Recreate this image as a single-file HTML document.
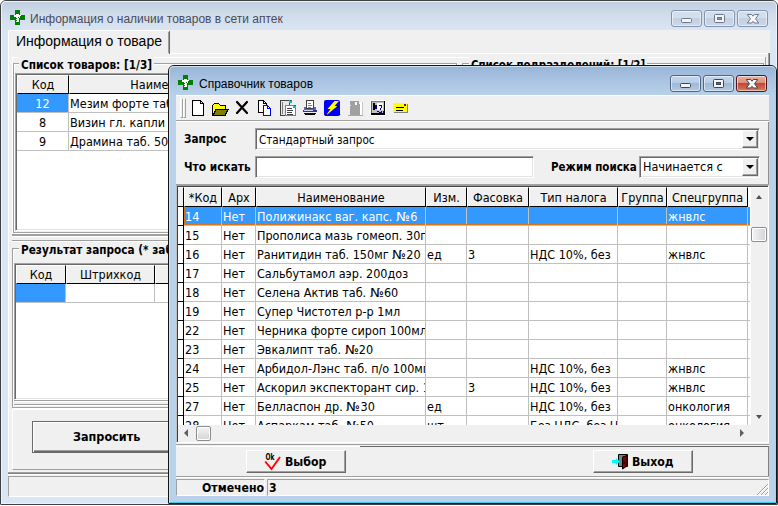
<!DOCTYPE html>
<html lang="ru">
<head>
<meta charset="utf-8">
<title>Информация о наличии товаров в сети аптек</title>
<style>
html,body{margin:0;padding:0;}
body{width:778px;height:506px;overflow:hidden;background:#fff;position:relative;
  font-family:"DejaVu Sans Condensed","DejaVu Sans","Liberation Sans",sans-serif;font-size:12.5px;color:#000;}
div,span{box-sizing:border-box;}
.a{position:absolute;}
.t{position:absolute;white-space:nowrap;line-height:16px;height:16px;}
.b{font-weight:bold;}
.lib{font-family:"Liberation Sans",sans-serif;}
.layer{position:absolute;left:0;top:0;width:778px;height:506px;overflow:hidden;}

/* ---------- windows ---------- */
.win{position:absolute;border:1px solid #404040;border-radius:6px 6px 1px 1px;overflow:hidden;}
#w1{left:0;top:0;width:778px;height:505px;background:#dbe6f4;}
#w1 .cap{position:absolute;left:0;top:0;right:0;height:30px;background:linear-gradient(#bfcddf 0,#cfdbea 40%,#dbe6f4 100%);}
#w1 .inner{position:absolute;left:0;top:0;right:0;bottom:0;border:1px solid #eef3fa;border-radius:5px 5px 0 0;}
#w2{left:168px;top:65px;width:609px;height:439px;background:#b9d1ea;border-color:#141414;}
#w2 .cap{position:absolute;left:0;top:0;right:0;height:30px;background:linear-gradient(#98b4d6 0,#a9c3e1 45%,#b9d1ea 100%);}
#w2 .inner{position:absolute;left:0;top:0;right:0;bottom:0;border:1px solid;border-color:#cfdff2 #8fdcf0 #3cc8ea #cfdff2;border-radius:5px 5px 0 0;}
.client{position:absolute;background:#f0f0f0;}

.cbtn{position:absolute;height:17px;border:1px solid #8493ad;border-radius:3px;box-shadow:inset 0 0 0 1px rgba(255,255,255,.55);}
.cb1{background:linear-gradient(#d3deec 0,#d3deec 45%,#c3d0e2 50%,#cbd7e7 100%);}
.cb2{background:linear-gradient(#c3d6ee 0,#b6cce7 47%,#9fb9d9 50%,#b3c9e4 100%);border-color:#56657f;}
.cbx{background:linear-gradient(#ecb0a2 0,#dc8c7a 47%,#c4472f 50%,#d67c64 100%);border-color:#4a1620;}

/* 3D borders */
.sunk{border:1px solid;border-color:#a0a0a0 #fff #fff #a0a0a0;}
.sunk2{border:1px solid;border-color:#a0a0a0 #fff #fff #a0a0a0;box-shadow:inset 1px 1px 0 #696969, inset -1px -1px 0 #e3e3e3;}
.hl{background:#3399ff;color:#fff;}

/* grid */
.hd{position:absolute;background:#f0f0f0;border-right:1px solid #000;border-bottom:1px solid #000;border-left:1px solid #fff;border-top:1px solid #fff;text-align:center;white-space:nowrap;overflow:hidden;}
.vl{position:absolute;width:1px;background:#c0c0c0;}
.hln{position:absolute;height:1px;background:#c0c0c0;}
.btn{position:absolute;background:#f0f0f0;border:1px solid;border-color:#fff #696969 #696969 #fff;box-shadow:inset -1px -1px 0 #a0a0a0;}
</style>
</head>
<body>

<!-- ================= MAIN WINDOW ================= -->
<div class="layer" id="L1">
<div class="win" id="w1"><div class="cap"></div><div class="inner"></div></div>
<svg class="a" style="left:10px;top:10px" width="16" height="16" viewBox="0 0 16 16" shape-rendering="crispEdges"><path d="M5 0h5v5h5v5h-5v5H5v-5H0V5h5z" fill="#008000"/><path d="M6 4h3v1h-3zM4 5h7v1h-7zM4 6h6v1h-6zM6 7h2v1h-2zM9 7h1v1h-1zM7 8h2v1h-2zM6 9h3v1h-3zM7 10h2v1h-2zM6 11h3v1h-3z" fill="#fff"/></svg>
<div class="t lib" style="left:30px;top:11px;font-size:12px;color:#4b4b58;">Информация о наличии товаров в сети аптек</div>

<div class="cbtn cb1" style="left:671px;top:10px;width:31px"></div>
<div class="cbtn cb1" style="left:704px;top:10px;width:31px"></div>
<div class="cbtn cb1" style="left:737px;top:10px;width:31px"></div>
<svg class="a" style="left:671px;top:10px" width="98" height="17" viewBox="0 0 98 17"><rect x="10.500" y="8.500" width="10" height="4" rx="1" fill="#f4f4f4" stroke="#6d7787"/><rect x="43.500" y="4.500" width="10" height="8" rx="1" fill="#f4f4f4" stroke="#6d7787"/><rect x="46.500" y="7.500" width="4" height="2" fill="#8a9ab4" stroke="#6d7787"/><path d="M76.3 4.500L80.6 4.500 82 6.200 83.400 4.500 87.700 4.500 84.500 8.750 87.700 13 83.400 13 82 11.300 80.600 13 76.300 13 79.500 8.750z" fill="#f8f8f8" stroke="#6d7787" stroke-width="1" stroke-linejoin="round"/></svg>
<div class="client" style="left:8px;top:30px;width:762px;height:467px"></div>

<!-- tab -->
<div class="a" style="left:8px;top:30px;width:162px;height:24px;border-left:1px solid #fff;border-top:1px solid #fff;border-right:1px solid #696969;border-radius:2px 2px 0 0"></div>
<div class="a" style="left:168px;top:32px;width:1px;height:21px;background:#a0a0a0"></div>
<div class="t lib" style="left:16px;top:33px;font-size:14px;">Информация о товаре</div>
<div class="a" style="left:170px;top:53px;width:599px;height:1px;background:#fff"></div>
<div class="a" style="left:8px;top:54px;width:1px;height:418px;background:#fff"></div>
<div class="a" style="left:12px;top:57px;width:753px;height:1px;background:#fff"></div>
<div class="a" style="left:12px;top:57px;width:1px;height:176px;background:#fff"></div>

<div class="a" style="left:768px;top:53px;width:1px;height:420px;background:#a0a0a0"></div>
<div class="a" style="left:769px;top:53px;width:1px;height:420px;background:#696969"></div>
<div class="a" style="left:765px;top:57px;width:1px;height:180px;background:#a0a0a0"></div>
<!-- groupbox 1 -->
<div class="a" style="left:13px;top:63px;width:444px;height:170px;border:1px solid #a0a0a0;box-shadow:1px 1px 0 #fff, inset 1px 1px 0 #fff;"></div>
<div class="t b" style="left:19px;top:57px;font-size:11.7px;background:#f0f0f0;padding:0 2px;">Список товаров: [1/3]</div>
<!-- groupbox right -->
<div class="a" style="left:462px;top:63px;width:302px;height:170px;border:1px solid #a0a0a0;box-shadow:1px 1px 0 #fff, inset 1px 1px 0 #fff;"></div>
<div class="t b" style="left:469px;top:57px;font-size:11.4px;background:#f0f0f0;padding:0 2px;">Список подразделений: [1/2]</div>

<!-- grid 1 -->
<div class="a" style="left:15px;top:73px;width:440px;height:158px;background:#fff;border:1px solid;border-color:#a0a0a0 #fff #fff #a0a0a0;box-shadow:inset 1px 1px 0 #696969, inset -1px -1px 0 #e3e3e3;"></div>
<div class="hd" style="left:17px;top:75px;width:52px;height:19px;line-height:17px">Код</div>
<div class="hd" style="left:69px;top:75px;width:210px;height:19px;line-height:17px">Наименование</div>
<div class="a hl" style="left:17px;top:94px;width:51px;height:18px;outline:1px dotted #e07000;outline-offset:-1px;text-align:center;line-height:20px">12</div>
<div class="t" style="left:17px;top:115px;width:51px;text-align:center">8</div>
<div class="t" style="left:17px;top:134px;width:51px;text-align:center">9</div>
<div class="t" style="left:70px;top:96px;">Мезим форте таб.</div>
<div class="t" style="left:70px;top:115px;">Визин гл. капли 1</div>
<div class="t" style="left:70px;top:134px;">Драмина таб. 50мг</div>
<div class="vl" style="left:68px;top:94px;height:57px"></div>
<div class="vl" style="left:278px;top:94px;height:57px"></div>
<div class="hln" style="left:17px;top:112px;width:262px"></div>
<div class="hln" style="left:17px;top:131px;width:262px"></div>
<div class="hln" style="left:17px;top:150px;width:262px"></div>

<!-- splitter / groupbox 2 -->
<div class="a" style="left:12px;top:234px;width:756px;height:2px;background:#a0a0a0"></div>
<div class="a" style="left:12px;top:236px;width:756px;height:1px;background:#fff"></div>
<div class="a" style="left:12px;top:240px;width:756px;height:1px;background:#a0a0a0"></div>
<div class="a" style="left:12px;top:241px;width:756px;height:1px;background:#fff"></div>
<div class="a" style="left:12px;top:248px;width:755px;height:160px;border:1px solid #a0a0a0;box-shadow:1px 1px 0 #fff, inset 1px 1px 0 #fff;"></div>
<div class="t b" style="left:19px;top:242px;font-size:11.7px;background:#f0f0f0;padding:0 2px;">Результат запроса (* заблокированные)</div>
<div class="a" style="left:14px;top:263px;width:751px;height:137px;background:#fff;border:1px solid;border-color:#a0a0a0 #fff #fff #a0a0a0;box-shadow:inset 1px 1px 0 #696969, inset -1px -1px 0 #e3e3e3;"></div>
<div class="hd" style="left:16px;top:265px;width:50px;height:19px;line-height:17px">Код</div>
<div class="hd" style="left:66px;top:265px;width:89px;height:19px;line-height:17px">Штрихкод</div>
<div class="hd" style="left:155px;top:265px;width:200px;height:19px;line-height:17px">Наименование</div>
<div class="a hl" style="left:16px;top:284px;width:49px;height:18px"></div>
<div class="vl" style="left:65px;top:284px;height:19px"></div>
<div class="vl" style="left:154px;top:284px;height:19px"></div>
<div class="hln" style="left:16px;top:302px;width:339px"></div>

<div class="a" style="left:14px;top:400px;width:751px;height:1px;background:#a0a0a0"></div>
<div class="a" style="left:14px;top:401px;width:751px;height:1px;background:#fff"></div>
<div class="a" style="left:14px;top:404px;width:751px;height:1px;background:#a0a0a0"></div>
<div class="a" style="left:14px;top:405px;width:751px;height:1px;background:#fff"></div>
<!-- bottom panel -->
<div class="a" style="left:12px;top:409px;width:756px;height:61px;border:1px solid;border-color:#fff #a0a0a0 #a0a0a0 #fff;"></div>
<div class="a" style="left:32px;top:421px;width:180px;height:32px;background:#f0f0f0;border:1px solid #696969;box-shadow:inset 1px 1px 0 #fff, inset -1px -1px 0 #696969, inset -2px -2px 0 #a0a0a0;"></div>
<div class="t b" style="left:73px;top:429px;font-size:12.5px;">Запросить</div>
<!-- status bar -->
<div class="a" style="left:8px;top:472px;width:762px;height:1px;background:#a0a0a0"></div>
<div class="a" style="left:8px;top:473px;width:762px;height:1px;background:#808080"></div>
<div class="a" style="left:8px;top:474px;width:762px;height:1px;background:#fff"></div>
<div class="a sunk" style="left:8px;top:476px;width:762px;height:21px;"></div>
</div>

<!-- ================= DIALOG ================= -->
<div class="layer" id="L2" style="left:168px;top:65px;width:610px;height:441px;">
<div class="a" style="left:-168px;top:-65px;width:778px;height:506px;">
<div class="win" id="w2"><div class="cap"></div><div class="inner"></div></div>
<svg class="a" style="left:178px;top:75px" width="16" height="16" viewBox="0 0 16 16" shape-rendering="crispEdges"><path d="M5 0h5v5h5v5h-5v5H5v-5H0V5h5z" fill="#008000"/><path d="M6 4h3v1h-3zM4 5h7v1h-7zM4 6h6v1h-6zM6 7h2v1h-2zM9 7h1v1h-1zM7 8h2v1h-2zM6 9h3v1h-3zM7 10h2v1h-2zM6 11h3v1h-3z" fill="#fff"/></svg>
<div class="t lib" style="left:199px;top:76px;font-size:12px;color:#000;">Справочник товаров</div>

<div class="cbtn cb2" style="left:670px;top:75px;width:31px"></div>
<div class="cbtn cb2" style="left:703px;top:75px;width:31px"></div>
<div class="cbtn cbx" style="left:736px;top:75px;width:31px"></div>
<svg class="a" style="left:670px;top:75px" width="98" height="17" viewBox="0 0 98 17"><rect x="10.500" y="8.500" width="10" height="4" rx="1" fill="#f4f4f4" stroke="#3b4658"/><rect x="43.500" y="4.500" width="10" height="8" rx="1" fill="#f4f4f4" stroke="#3b4658"/><rect x="46.500" y="7.500" width="4" height="2" fill="#4a6a9c" stroke="#3b4658"/><path d="M76.3 4.500L80.6 4.500 82 6.200 83.400 4.500 87.700 4.500 84.500 8.750 87.700 13 83.400 13 82 11.300 80.600 13 76.300 13 79.500 8.750z" fill="#f8f8f8" stroke="#3b4658" stroke-width="1" stroke-linejoin="round"/></svg>
<div class="client" style="left:176px;top:95px;width:593px;height:401px"></div>
<!-- toolbar -->
<div class="a" style="left:176px;top:95px;width:593px;height:1px;background:#fff"></div>
<div class="a" style="left:176px;top:120px;width:593px;height:1px;background:#a0a0a0"></div>
<div class="a" style="left:176px;top:121px;width:593px;height:1px;background:#fff"></div>
<div class="a" style="left:180px;top:98px;width:3px;height:20px;border:1px solid;border-color:#fff #a0a0a0 #a0a0a0 #fff"></div>
<div class="a" style="left:183px;top:98px;width:3px;height:20px;border:1px solid;border-color:#fff #a0a0a0 #a0a0a0 #fff"></div>
<svg class="a" style="left:190px;top:98px" width="222" height="20" viewBox="190 98 222 20" shape-rendering="crispEdges">
<!-- new -->
<path d="M192.5 100.5h8l3 3v12h-11z" fill="#fff" stroke="#000"/><path d="M200.5 100.5v3h3" fill="none" stroke="#000"/>
<!-- open -->
<path d="M212.5 115.5v-10l2-2h4l2 2h5v4" fill="#ffff00" stroke="#000"/><path d="M213 115.5l3-6h12l-3 6z" fill="#808000" stroke="#000"/>
<!-- delete -->
<g shape-rendering="auto"><path d="M237 102l10 11M247 102l-10 11" stroke="#000" stroke-width="2.2" fill="none" stroke-linecap="round"/></g>
<!-- copy -->
<path d="M258.5 100.5h5l3 3v9h-8z" fill="#fff" stroke="#000"/><path d="M263.5 100.5v3h3" fill="none" stroke="#000"/>
<path d="M263.5 105.5h4l3 3v7h-7z" fill="#fff" stroke="#0000ff"/><path d="M267.5 105.5v3h3" fill="none" stroke="#0000ff"/>
<!-- paste -->
<path d="M280.5 100.5h9v15h-9z" fill="#e8e8e8" stroke="#404040"/><path d="M282 102v12" stroke="#808080"/>
<path d="M285.5 105.5h10v10h-10z" fill="#fff" stroke="#808080"/><path d="M287 108h5M287 110h6M287 112h5M287 114h6" stroke="#404040"/>
<path d="M289 100h3v3h-3zM293 105h3v3h-3z" fill="#00c0e0"/><path d="M290 100h2v1h-2zM294 105h2v1h-2z" fill="#008060"/>
<!-- print -->
<path d="M306.5 100.5h7v8h-7z" fill="#fff" stroke="#404040"/><path d="M308 103h3M308 105h4M308 107h3" stroke="#808080"/>
<path d="M304 107h2v2h8v-2h2v5h-12z" fill="#6060d0"/><path d="M303 110h14v2h-14z" fill="#3030a0"/><path d="M304 110h9v1h-9z" fill="#d0d0ff"/><path d="M304 113h12v1h-12z" fill="#000080"/><path d="M305 114h10v1h-10z" fill="#000"/>
<!-- lightning -->
<g shape-rendering="auto"><rect x="324" y="100" width="16" height="16" rx="2" fill="#0000ff"/><path d="M334.5 101h4.5l-4.500 5h3l-11.5 9.5 4.5-6.5h-3z" fill="#ffff00"/><path d="M337 106l1.500 1.500M339 113.500l1 1.500M325 114l1.500 1.500" stroke="#000" stroke-width="1.2"/></g>
<!-- floppy disabled -->
<path d="M350 101h10v14h-10z" fill="#a0a0a0"/><path d="M355 102h2v3h-2z" fill="#f8f8f8"/><path d="M350 105h1v1h-1zM359 101h1v3h-1z" fill="#f0f0f0"/><path d="M360 102h2v13h-2z" fill="#fff"/><path d="M362 102h1v13h-1z" fill="#c8c8c8"/><path d="M348 115h15v1h-15z" fill="#a8a8a8"/>
<!-- picture -->
<path d="M370 100h16v16h-16z" fill="#fff"/><path d="M371 101h14v14h-14z" fill="#c0c0c0"/><path d="M371 101h14v1h-14z" fill="#808080"/><path d="M371 101h1v13h-1z" fill="#606060"/><path d="M384 101h1v14h-1zM371 113h14v2h-14z" fill="#000"/><path d="M377 103h6v7h-6z" fill="#fff"/><path d="M373 103h2v7h-2z" fill="#000"/><path d="M375 105h2v4h-2zM379 105h3v1h-3zM381 106h1v2h-1zM380 108h1v2h-1zM377 111h2v1h-2zM379 112h2v1h-2zM381 111h1v2h-1zM383 111h1v2h-1z" fill="#0000a0"/>
<!-- note -->
<path d="M394 104h14v9h-14z" fill="#808080"/><path d="M393 103h14v9h-14z" fill="#ffff00"/><path d="M396 107h8v1h-8zM396 110h7v1h-7z" fill="#000"/><path d="M404 104h2v2h-2z" fill="#800080"/>
</svg>
<!-- query panel -->
<div class="a" style="left:768px;top:122px;width:1px;height:63px;background:#909090"></div>
<div class="a" style="left:176px;top:184px;width:593px;height:1px;background:#a0a0a0"></div>
<div class="t b" style="left:184px;top:131px;font-size:11.6px;">Запрос</div>
<div class="a sunk2" style="left:255px;top:128px;width:505px;height:22px;background:#fff"></div>
<div class="t" style="left:259px;top:132px;font-size:11.6px;">Стандартный запрос</div>
<div class="btn" style="left:742px;top:130px;width:16px;height:18px;"></div><div class="a" style="left:746px;top:137px;width:0;height:0;border:4px solid transparent;border-top:4px solid #000;border-bottom:none"></div>
<div class="t b" style="left:184px;top:159px;font-size:11.8px;">Что искать</div>
<div class="a sunk2" style="left:255px;top:156px;width:279px;height:22px;background:#fff"></div>
<div class="t b" style="left:551px;top:159px;font-size:11.5px;">Режим поиска</div>
<div class="a sunk2" style="left:639px;top:156px;width:121px;height:22px;background:#fff"></div>
<div class="t" style="left:643px;top:159px;font-size:12.5px;">Начинается с</div>
<div class="btn" style="left:742px;top:158px;width:16px;height:18px;"></div><div class="a" style="left:746px;top:165px;width:0;height:0;border:4px solid transparent;border-top:4px solid #000;border-bottom:none"></div>
<!-- grid -->
<div class="a" style="left:176px;top:185px;width:593px;height:258px;background:#fff;border:1px solid;border-color:#a0a0a0 #fff #fff #c0c0c0;box-shadow:inset 1px 1px 0 #404040;"></div>
<div class="a" style="left:178px;top:187px;width:572px;height:238px;overflow:hidden;">
<div class="a" style="left:-178px;top:-187px;width:778px;height:506px;">
<div class="hd" style="left:178px;top:187px;width:6px;height:20px;border-left:none"></div>
<div class="hd" style="left:184px;top:187px;width:38px;height:20px;line-height:19px">*Код</div>
<div class="hd" style="left:222px;top:187px;width:34px;height:20px;line-height:19px">Арх</div>
<div class="hd" style="left:256px;top:187px;width:170px;height:20px;line-height:19px">Наименование</div>
<div class="hd" style="left:426px;top:187px;width:41px;height:20px;line-height:19px">Изм.</div>
<div class="hd" style="left:467px;top:187px;width:62px;height:20px;line-height:19px">Фасовка</div>
<div class="hd" style="left:529px;top:187px;width:89px;height:20px;line-height:19px">Тип налога</div>
<div class="hd" style="left:618px;top:187px;width:49px;height:20px;line-height:19px">Группа</div>
<div class="hd" style="left:667px;top:187px;width:81px;height:20px;line-height:19px">Спецгруппа</div>
<div class="a" style="left:178px;top:207px;width:6px;height:19px;background:#fff;border-right:1px solid #000;border-bottom:1px solid #000"></div>
<div class="a hl" style="left:184px;top:207px;width:566px;height:18px;"></div>
<div class="t" style="left:185px;top:209px;width:36px;overflow:hidden;color:#fff;">14</div>
<div class="t" style="left:223px;top:209px;width:32px;overflow:hidden;color:#fff;">Нет</div>
<div class="t" style="left:257px;top:209px;width:168px;overflow:hidden;color:#fff;">Полижинакс ваг. капс. <span style="display:inline-block;transform:scaleX(1.2);transform-origin:0 50%;margin-right:2.5px">№</span>6</div>
<div class="t" style="left:668px;top:209px;width:80px;overflow:hidden;color:#fff;">жнвлс</div>
<div class="hln" style="left:184px;top:225px;width:566px"></div>
<div class="a" style="left:178px;top:226px;width:6px;height:19px;background:#fff;border-right:1px solid #000;border-bottom:1px solid #000"></div>
<div class="t" style="left:185px;top:228px;width:36px;overflow:hidden;">15</div>
<div class="t" style="left:223px;top:228px;width:32px;overflow:hidden;">Нет</div>
<div class="t" style="left:257px;top:228px;width:168px;overflow:hidden;">Прополиса мазь гомеоп. 30г</div>
<div class="hln" style="left:184px;top:244px;width:566px"></div>
<div class="a" style="left:178px;top:245px;width:6px;height:19px;background:#fff;border-right:1px solid #000;border-bottom:1px solid #000"></div>
<div class="t" style="left:185px;top:247px;width:36px;overflow:hidden;">16</div>
<div class="t" style="left:223px;top:247px;width:32px;overflow:hidden;">Нет</div>
<div class="t" style="left:257px;top:247px;width:168px;overflow:hidden;">Ранитидин таб. 150мг <span style="display:inline-block;transform:scaleX(1.2);transform-origin:0 50%;margin-right:2.5px">№</span>20</div>
<div class="t" style="left:427px;top:247px;width:39px;overflow:hidden;">ед</div>
<div class="t" style="left:468px;top:247px;width:60px;overflow:hidden;">3</div>
<div class="t" style="left:530px;top:247px;width:87px;overflow:hidden;">НДС 10%, без</div>
<div class="t" style="left:668px;top:247px;width:80px;overflow:hidden;">жнвлс</div>
<div class="hln" style="left:184px;top:263px;width:566px"></div>
<div class="a" style="left:178px;top:264px;width:6px;height:19px;background:#fff;border-right:1px solid #000;border-bottom:1px solid #000"></div>
<div class="t" style="left:185px;top:266px;width:36px;overflow:hidden;">17</div>
<div class="t" style="left:223px;top:266px;width:32px;overflow:hidden;">Нет</div>
<div class="t" style="left:257px;top:266px;width:168px;overflow:hidden;">Сальбутамол аэр. 200доз</div>
<div class="hln" style="left:184px;top:282px;width:566px"></div>
<div class="a" style="left:178px;top:283px;width:6px;height:19px;background:#fff;border-right:1px solid #000;border-bottom:1px solid #000"></div>
<div class="t" style="left:185px;top:285px;width:36px;overflow:hidden;">18</div>
<div class="t" style="left:223px;top:285px;width:32px;overflow:hidden;">Нет</div>
<div class="t" style="left:257px;top:285px;width:168px;overflow:hidden;">Селена Актив таб. <span style="display:inline-block;transform:scaleX(1.2);transform-origin:0 50%;margin-right:2.5px">№</span>60</div>
<div class="hln" style="left:184px;top:301px;width:566px"></div>
<div class="a" style="left:178px;top:302px;width:6px;height:19px;background:#fff;border-right:1px solid #000;border-bottom:1px solid #000"></div>
<div class="t" style="left:185px;top:304px;width:36px;overflow:hidden;">19</div>
<div class="t" style="left:223px;top:304px;width:32px;overflow:hidden;">Нет</div>
<div class="t" style="left:257px;top:304px;width:168px;overflow:hidden;">Супер Чистотел р-р 1мл</div>
<div class="hln" style="left:184px;top:320px;width:566px"></div>
<div class="a" style="left:178px;top:321px;width:6px;height:19px;background:#fff;border-right:1px solid #000;border-bottom:1px solid #000"></div>
<div class="t" style="left:185px;top:323px;width:36px;overflow:hidden;">22</div>
<div class="t" style="left:223px;top:323px;width:32px;overflow:hidden;">Нет</div>
<div class="t" style="left:257px;top:323px;width:168px;overflow:hidden;">Черника форте сироп 100мл</div>
<div class="hln" style="left:184px;top:339px;width:566px"></div>
<div class="a" style="left:178px;top:340px;width:6px;height:19px;background:#fff;border-right:1px solid #000;border-bottom:1px solid #000"></div>
<div class="t" style="left:185px;top:342px;width:36px;overflow:hidden;">23</div>
<div class="t" style="left:223px;top:342px;width:32px;overflow:hidden;">Нет</div>
<div class="t" style="left:257px;top:342px;width:168px;overflow:hidden;">Эвкалипт таб. <span style="display:inline-block;transform:scaleX(1.2);transform-origin:0 50%;margin-right:2.5px">№</span>20</div>
<div class="hln" style="left:184px;top:358px;width:566px"></div>
<div class="a" style="left:178px;top:359px;width:6px;height:19px;background:#fff;border-right:1px solid #000;border-bottom:1px solid #000"></div>
<div class="t" style="left:185px;top:361px;width:36px;overflow:hidden;">24</div>
<div class="t" style="left:223px;top:361px;width:32px;overflow:hidden;">Нет</div>
<div class="t" style="left:257px;top:361px;width:168px;overflow:hidden;">Арбидол-Лэнс таб. п/о 100мг</div>
<div class="t" style="left:530px;top:361px;width:87px;overflow:hidden;">НДС 10%, без</div>
<div class="t" style="left:668px;top:361px;width:80px;overflow:hidden;">жнвлс</div>
<div class="hln" style="left:184px;top:377px;width:566px"></div>
<div class="a" style="left:178px;top:378px;width:6px;height:19px;background:#fff;border-right:1px solid #000;border-bottom:1px solid #000"></div>
<div class="t" style="left:185px;top:380px;width:36px;overflow:hidden;">25</div>
<div class="t" style="left:223px;top:380px;width:32px;overflow:hidden;">Нет</div>
<div class="t" style="left:257px;top:380px;width:168px;overflow:hidden;">Аскорил экспекторант сир. 100мл</div>
<div class="t" style="left:468px;top:380px;width:60px;overflow:hidden;">3</div>
<div class="t" style="left:530px;top:380px;width:87px;overflow:hidden;">НДС 10%, без</div>
<div class="t" style="left:668px;top:380px;width:80px;overflow:hidden;">жнвлс</div>
<div class="hln" style="left:184px;top:396px;width:566px"></div>
<div class="a" style="left:178px;top:397px;width:6px;height:19px;background:#fff;border-right:1px solid #000;border-bottom:1px solid #000"></div>
<div class="t" style="left:185px;top:399px;width:36px;overflow:hidden;">27</div>
<div class="t" style="left:223px;top:399px;width:32px;overflow:hidden;">Нет</div>
<div class="t" style="left:257px;top:399px;width:168px;overflow:hidden;">Белласпон др. <span style="display:inline-block;transform:scaleX(1.2);transform-origin:0 50%;margin-right:2.5px">№</span>30</div>
<div class="t" style="left:427px;top:399px;width:39px;overflow:hidden;">ед</div>
<div class="t" style="left:530px;top:399px;width:87px;overflow:hidden;">НДС 10%, без</div>
<div class="t" style="left:668px;top:399px;width:80px;overflow:hidden;">онкология</div>
<div class="hln" style="left:184px;top:415px;width:566px"></div>
<div class="a" style="left:178px;top:416px;width:6px;height:19px;background:#fff;border-right:1px solid #000;border-bottom:1px solid #000"></div>
<div class="t" style="left:185px;top:418px;width:36px;overflow:hidden;">28</div>
<div class="t" style="left:223px;top:418px;width:32px;overflow:hidden;">Нет</div>
<div class="t" style="left:257px;top:418px;width:168px;overflow:hidden;">Аспаркам таб. <span style="display:inline-block;transform:scaleX(1.2);transform-origin:0 50%;margin-right:2.5px">№</span>50</div>
<div class="t" style="left:427px;top:418px;width:39px;overflow:hidden;">шт</div>
<div class="t" style="left:530px;top:418px;width:87px;overflow:hidden;">Без НДС, без НП</div>
<div class="t" style="left:668px;top:418px;width:80px;overflow:hidden;">онкология</div>
<div class="hln" style="left:184px;top:434px;width:566px"></div>
<div class="vl" style="left:221px;top:207px;height:220px"></div>
<div class="vl" style="left:255px;top:207px;height:220px"></div>
<div class="vl" style="left:425px;top:207px;height:220px"></div>
<div class="vl" style="left:466px;top:207px;height:220px"></div>
<div class="vl" style="left:528px;top:207px;height:220px"></div>
<div class="vl" style="left:617px;top:207px;height:220px"></div>
<div class="vl" style="left:666px;top:207px;height:220px"></div>
<div class="vl" style="left:747px;top:207px;height:220px"></div>
<div class="a" style="left:184px;top:207px;width:567px;height:18px;border:1px dotted #d87818;"></div>
</div></div>
<div class="a" style="left:751px;top:188px;width:17px;height:237px;background:#f0f0f0"></div>
<div class="a" style="left:756px;top:195px;width:0;height:0;border:3.5px solid transparent;border-bottom:4px solid #505050;border-top:none"></div>
<div class="a" style="left:756px;top:415px;width:0;height:0;border:3.5px solid transparent;border-top:4px solid #505050;border-bottom:none"></div>
<div class="a" style="left:751px;top:227px;width:16px;height:15px;border:1px solid #8e8e8e;border-radius:2px;background:linear-gradient(90deg,#f4f4f4,#e4e4e6 50%,#d4d4d8);box-shadow:inset 0 0 0 1px #fff"></div>
<div class="a" style="left:178px;top:425px;width:590px;height:17px;background:#f0f0f0"></div>
<div class="a" style="left:184px;top:429px;width:0;height:0;border:4px solid transparent;border-right:4px solid #606060;border-left:none"></div>
<div class="a" style="left:740px;top:429px;width:0;height:0;border:4px solid transparent;border-left:4px solid #606060;border-right:none"></div>
<div class="a" style="left:196px;top:426px;width:15px;height:15px;border:1px solid #8e8e8e;border-radius:2px;background:linear-gradient(#f4f4f4,#e4e4e6 50%,#d4d4d8);box-shadow:inset 0 0 0 1px #fff"></div>
<!-- buttons -->
<div class="a" style="left:176px;top:444px;width:593px;height:1px;background:#a0a0a0"></div>
<div class="a" style="left:176px;top:446px;width:184px;height:1px;background:#fff"></div>
<div class="a" style="left:360px;top:446px;width:409px;height:1px;background:#696969"></div>
<div class="a" style="left:768px;top:446px;width:1px;height:30px;background:#808080"></div>
<div class="btn" style="left:246px;top:450px;width:100px;height:23px;"></div>
<svg class="a" style="left:264px;top:453px" width="18" height="18" viewBox="0 0 18 18"><text x="1.5" y="7" font-family="DejaVu Sans Condensed, Liberation Sans, sans-serif" font-size="8" font-weight="bold" fill="#000" textLength="9" lengthAdjust="spacingAndGlyphs">Ok</text><path d="M1.2 8.500l6.300 7.500 8.500-12" fill="none" stroke="#ff0000" stroke-width="1.9"/></svg>
<div class="t b" style="left:285px;top:454px;font-size:12.2px">Выбор</div>
<div class="btn" style="left:593px;top:450px;width:100px;height:23px;"></div>
<svg class="a" style="left:612px;top:453px" width="18" height="18" viewBox="0 0 18 18"><path d="M6.500 1.500h9v12h-9z" fill="#808080" stroke="#000"/><path d="M10.500 4l4.500-1.500v10.500l-4.500 3z" fill="#800000" stroke="#000" stroke-linejoin="round"/><path d="M12 8.500v2.500" stroke="#000"/><path d="M0 7h4v-2l4 3.500-4 3.500v-2h-4z" fill="#00ffff"/></svg>
<div class="t b" style="left:632px;top:454px;font-size:12.2px">Выход</div>
<!-- status -->
<div class="a" style="left:176px;top:476px;width:593px;height:1px;background:#a0a0a0"></div>
<div class="a" style="left:176px;top:477px;width:593px;height:1px;background:#fff"></div>
<div class="a sunk" style="left:176px;top:479px;width:89px;height:17px;"></div>
<div class="t b" style="left:202px;top:480px;font-size:12.2px">Отмечено</div>
<div class="a sunk" style="left:267px;top:479px;width:502px;height:17px;"></div>
<div class="t b" style="left:269px;top:480px;font-size:12.2px">3</div>
<svg class="a" style="left:756px;top:483px" width="13" height="13" viewBox="0 0 13 13"><path d="M12 1L1 12M12 5L5 12M12 9L9 12" stroke="#a0a0a0" stroke-width="1"/><path d="M12 2L2 12M12 6L6 12M12 10L10 12" stroke="#fff" stroke-width="1"/></svg>
</div>
</div>

</body>
</html>
